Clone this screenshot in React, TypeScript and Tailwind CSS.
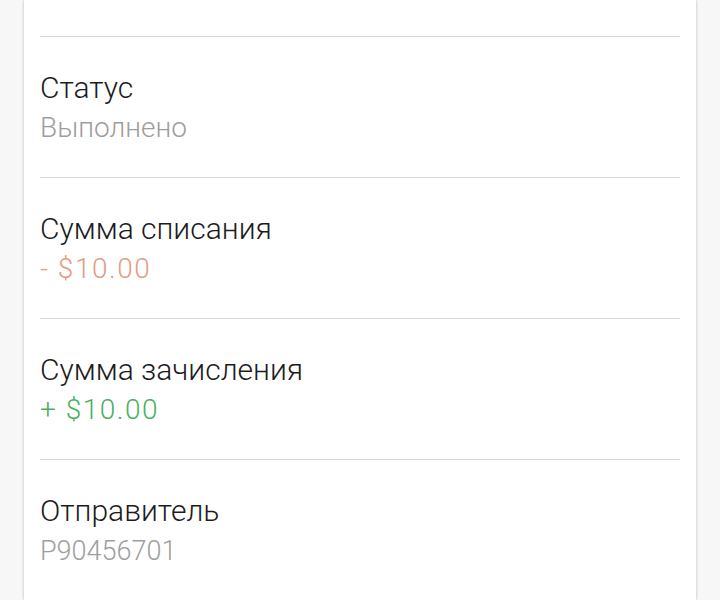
export default function App() {
  const rows = [
    { label: "Статус", value: "Выполнено", cls: "text-[28px] text-[#9e9e9e]" },
    { label: "Сумма списания", value: "- $10.00", cls: "text-[28px] tracking-[1.5px] text-[#e59c82]" },
    { label: "Сумма зачисления", value: "+ $10.00", cls: "text-[28px] tracking-[1.5px] text-[#4caf5f]" },
    { label: "Отправитель", value: "P90456701", cls: "text-[27px] text-[#9e9e9e]" },
  ];
  return (
    <div
      className="w-[720px] h-[600px] overflow-hidden bg-[#f7f7f7] px-[24px]"
      style={{ fontFamily: "Roboto, 'Noto Sans', sans-serif" }}
    >
      <div className="h-full bg-white shadow-[0_0_3px_rgba(0,0,0,0.25)] px-[16px]">
        <div className="h-[37px] border-b border-[#d6d6d6]" />
        {rows.map((r, i) => (
          <div
            key={i}
            className={`flex flex-col pt-[31px] pb-[29px] ${i < rows.length - 1 ? "border-b border-[#d6d6d6]" : ""}`}
          >
            <div className="text-[30px] leading-[40px] font-light text-[#1c1c1c]">{r.label}</div>
            <div className={`leading-[40px] font-light ${r.cls}`}>{r.value}</div>
          </div>
        ))}
      </div>
    </div>
  );
}
